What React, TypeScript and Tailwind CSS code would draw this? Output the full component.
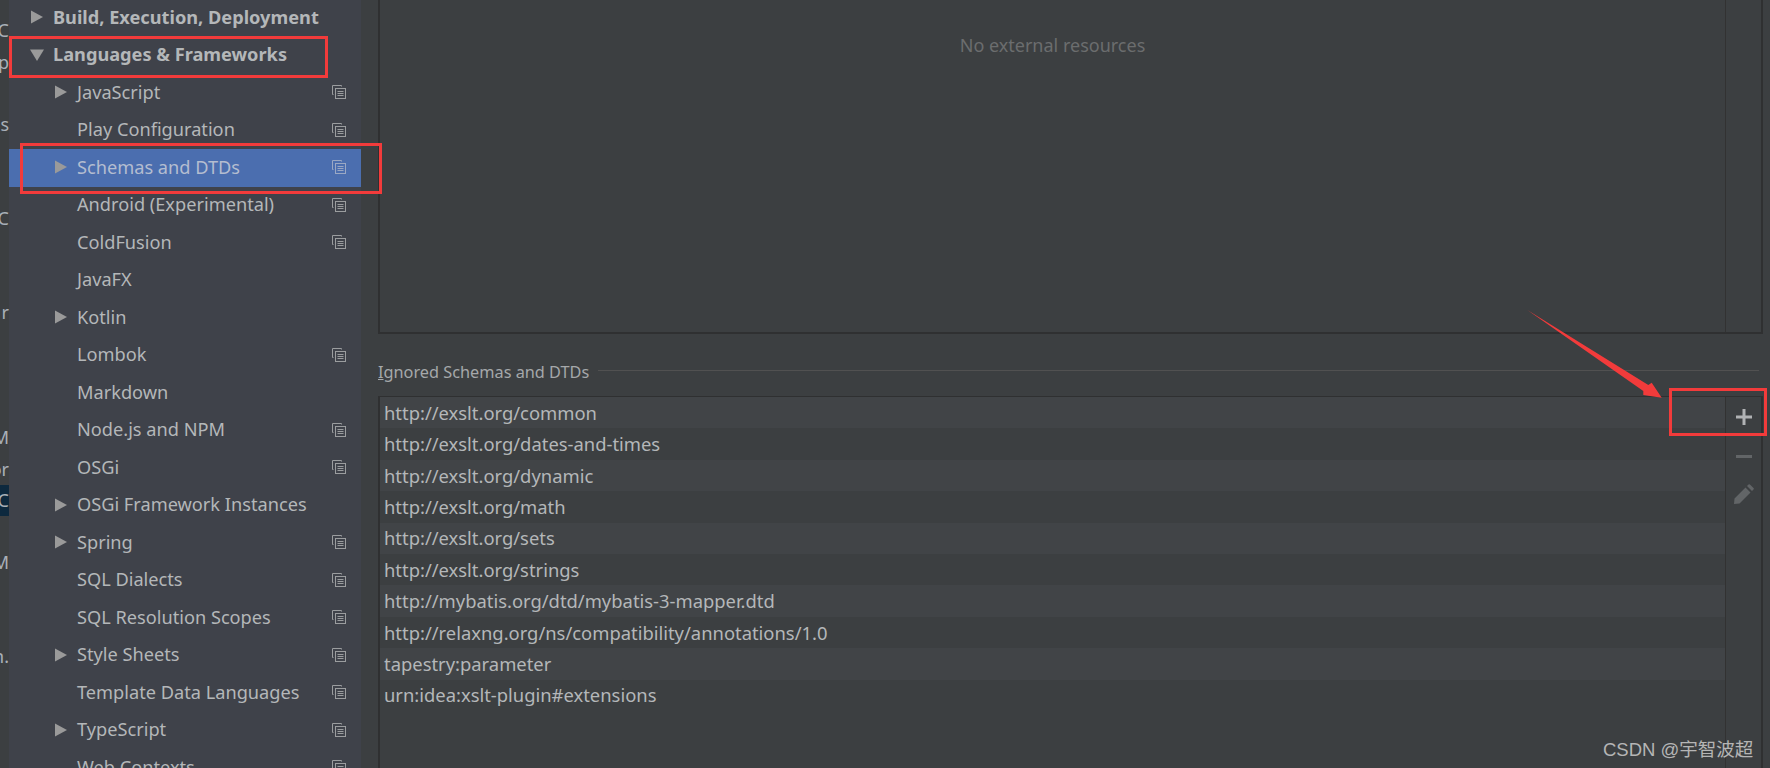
const treeRows = [
  { label: "JavaScript", arrow: true, copy: true },
  { label: "Play Configuration", arrow: false, copy: true },
  { label: "Schemas and DTDs", arrow: true, copy: true, selected: true },
  { label: "Android (Experimental)", arrow: false, copy: true },
  { label: "ColdFusion", arrow: false, copy: true },
  { label: "JavaFX", arrow: false, copy: false },
  { label: "Kotlin", arrow: true, copy: false },
  { label: "Lombok", arrow: false, copy: true },
  { label: "Markdown", arrow: false, copy: false },
  { label: "Node.js and NPM", arrow: false, copy: true },
  { label: "OSGi", arrow: false, copy: true },
  { label: "OSGi Framework Instances", arrow: true, copy: false },
  { label: "Spring", arrow: true, copy: true },
  { label: "SQL Dialects", arrow: false, copy: true },
  { label: "SQL Resolution Scopes", arrow: false, copy: true },
  { label: "Style Sheets", arrow: true, copy: true },
  { label: "Template Data Languages", arrow: false, copy: true },
  { label: "TypeScript", arrow: true, copy: true },
  { label: "Web Contexts", arrow: false, copy: true },
];

const ignored = [
  "http://exslt.org/common",
  "http://exslt.org/dates-and-times",
  "http://exslt.org/dynamic",
  "http://exslt.org/math",
  "http://exslt.org/sets",
  "http://exslt.org/strings",
  "http://mybatis.org/dtd/mybatis-3-mapper.dtd",
  "http://relaxng.org/ns/compatibility/annotations/1.0",
  "tapestry:parameter",
  "urn:idea:xslt-plugin#extensions",
];

// clipped ends of the project tree behind the settings dialog
const behind = ["", "C", "p", "", "s", "", "", "C", "", "", "r", "", "", "", "M", "or", "C", "", "M", "", "", "n.", "", "", ""];

function Arrow({ down = false }: { down?: boolean }) {
  return (
    <svg width="14" height="14" viewBox="0 0 14 14" className="shrink-0">
      {down ? <path d="M0 1.5h14L7 13z" fill="#9a9a9a" /> : <path d="M1 0.5v13L13 7z" fill="#9a9a9a" />}
    </svg>
  );
}

function CopyIcon({ dim = false }: { dim?: boolean }) {
  const c = dim ? "#9aa8c4" : "#9b9d9f";
  return (
    <svg width="14" height="14" viewBox="0 0 14 14" fill="none" stroke={c} strokeWidth="1" className="shrink-0">
      <path d="M9.5 1.5V0.5H0.5V9.5H1.5" />
      <rect x="3.5" y="3.5" width="10" height="10" />
      <path d="M5.5 6.5h6M5.5 8.5h6M5.5 10.5h6" />
    </svg>
  );
}

export default function App() {
  return (
    <div className="relative flex h-[768px] w-[1770px] overflow-hidden bg-[#3c3f41] font-['Noto_Sans','Noto_Sans_CJK_SC',sans-serif]">
      <div className="-mt-[16px] w-[9px] shrink-0 overflow-hidden bg-[#3c3f41] text-[18px] text-[#a9b0b8]">
        {behind.map((t, i) => (
          <div
            key={i}
            className={`flex h-[31.3px] w-[9px] items-center justify-end whitespace-nowrap ${t === "C" && i === 16 ? "bg-[#0d293e]" : ""}`}
          >
            {t}
          </div>
        ))}
      </div>

      <aside className="-mt-[1px] h-[770px] w-[352px] shrink-0 overflow-hidden bg-[#3f424a] text-[18.2px] text-[#b4b7b9]">
        <div className="flex h-[37.5px] items-center gap-[9px] pb-px pl-[21px] font-bold">
          <Arrow />
          <span>Build, Execution, Deployment</span>
        </div>
        <div className="flex h-[37.5px] items-center gap-[9px] pb-px pl-[21px] font-bold">
          <Arrow down />
          <span>Languages &amp; Frameworks</span>
        </div>
        {treeRows.map((row) => (
          <div
            key={row.label}
            className={`flex h-[37.5px] items-center pb-px pl-[45px] pr-[15px] ${row.selected ? "bg-[#4b6eaf] text-[#b4bdd0]" : ""}`}
          >
            <span className="w-[12px] shrink-0">{row.arrow && <Arrow />}</span>
            <span className="ml-[11px] flex-1 whitespace-nowrap">{row.label}</span>
            {row.copy && <CopyIcon dim={row.selected} />}
          </div>
        ))}
      </aside>

      <main className="flex min-w-0 flex-1 flex-col pl-[17px] pr-[7px]">
        <section className="-mt-[2px] flex h-[336px] shrink-0 border-2 border-[#2f3031]">
          <div className="flex flex-1 items-start justify-center pt-[32px] text-[18px] text-[#6b6d6e]">
            No external resources
          </div>
          <div className="w-[36px] border-l border-[#323232]" />
        </section>

        <div className="mt-[24px] flex h-[28px] shrink-0 items-center gap-[9px] pr-[4px] text-[16.3px] text-[#a5a8aa]">
          <span>
            <span className="underline">I</span>gnored Schemas and DTDs
          </span>
          <div className="-mt-[4px] h-px flex-1 bg-[#515151]" />
        </div>

        <section className="mt-[10px] flex min-h-0 flex-1 border-x-2 border-t border-[#2f3031]">
          <div className="flex-1 text-[18.4px] text-[#b4b7b9]">
            {ignored.map((url, i) => (
              <div
                key={url}
                className={`flex h-[31.4px] items-center pl-[4px] ${i % 2 === 0 ? "bg-[#414447]" : ""}`}
              >
                {url}
              </div>
            ))}
          </div>
          <div className="flex w-[36px] flex-col items-center border-l border-[#323232] pt-[12px]">
            <svg width="16" height="16" viewBox="0 0 16 16" fill="#b0b2b4">
              <path d="M6.5 0h3v6.5H16v3H9.5V16h-3V9.5H0v-3h6.5z" />
            </svg>
            <svg width="16" height="4" viewBox="0 0 16 4" fill="#626567" className="mt-[30px]">
              <rect width="16" height="3" />
            </svg>
            <svg width="20" height="20" viewBox="0 0 20 20" fill="#626567" className="mt-[25px]">
              <path d="M0 20l.5-5.5L11.5 3.5l5 5L5.5 19.5zM13 2l1.5-1.5a1 1 0 0 1 1.4 0l3.6 3.6a1 1 0 0 1 0 1.4L18 7z" />
            </svg>
          </div>
        </section>
      </main>

      {/* screenshot annotations */}
      <div className="absolute left-[9px] top-[36px] h-[42px] w-[319px] border-[3px] border-[#f23b3b]" />
      <div className="absolute left-[20px] top-[143px] h-[51px] w-[362px] border-[3px] border-[#f23b3b]" />
      <div className="absolute left-[1669px] top-[388px] h-[48px] w-[98px] border-[3px] border-[#f23b3b]" />
      <svg className="absolute left-[1520px] top-[305px]" width="150" height="100" viewBox="0 0 150 100">
        <path d="M7.3 5L128.3 80L131.7 77.7L141.7 92.7L123.3 90L123.3 86z" fill="#f23b3b" />
      </svg>

      <div className="absolute left-[1603px] top-[736px] font-['Liberation_Sans','Noto_Sans_CJK_SC',sans-serif] text-[18.5px] text-[#b5b5b5]">
        CSDN @宇智波超
      </div>
    </div>
  );
}
